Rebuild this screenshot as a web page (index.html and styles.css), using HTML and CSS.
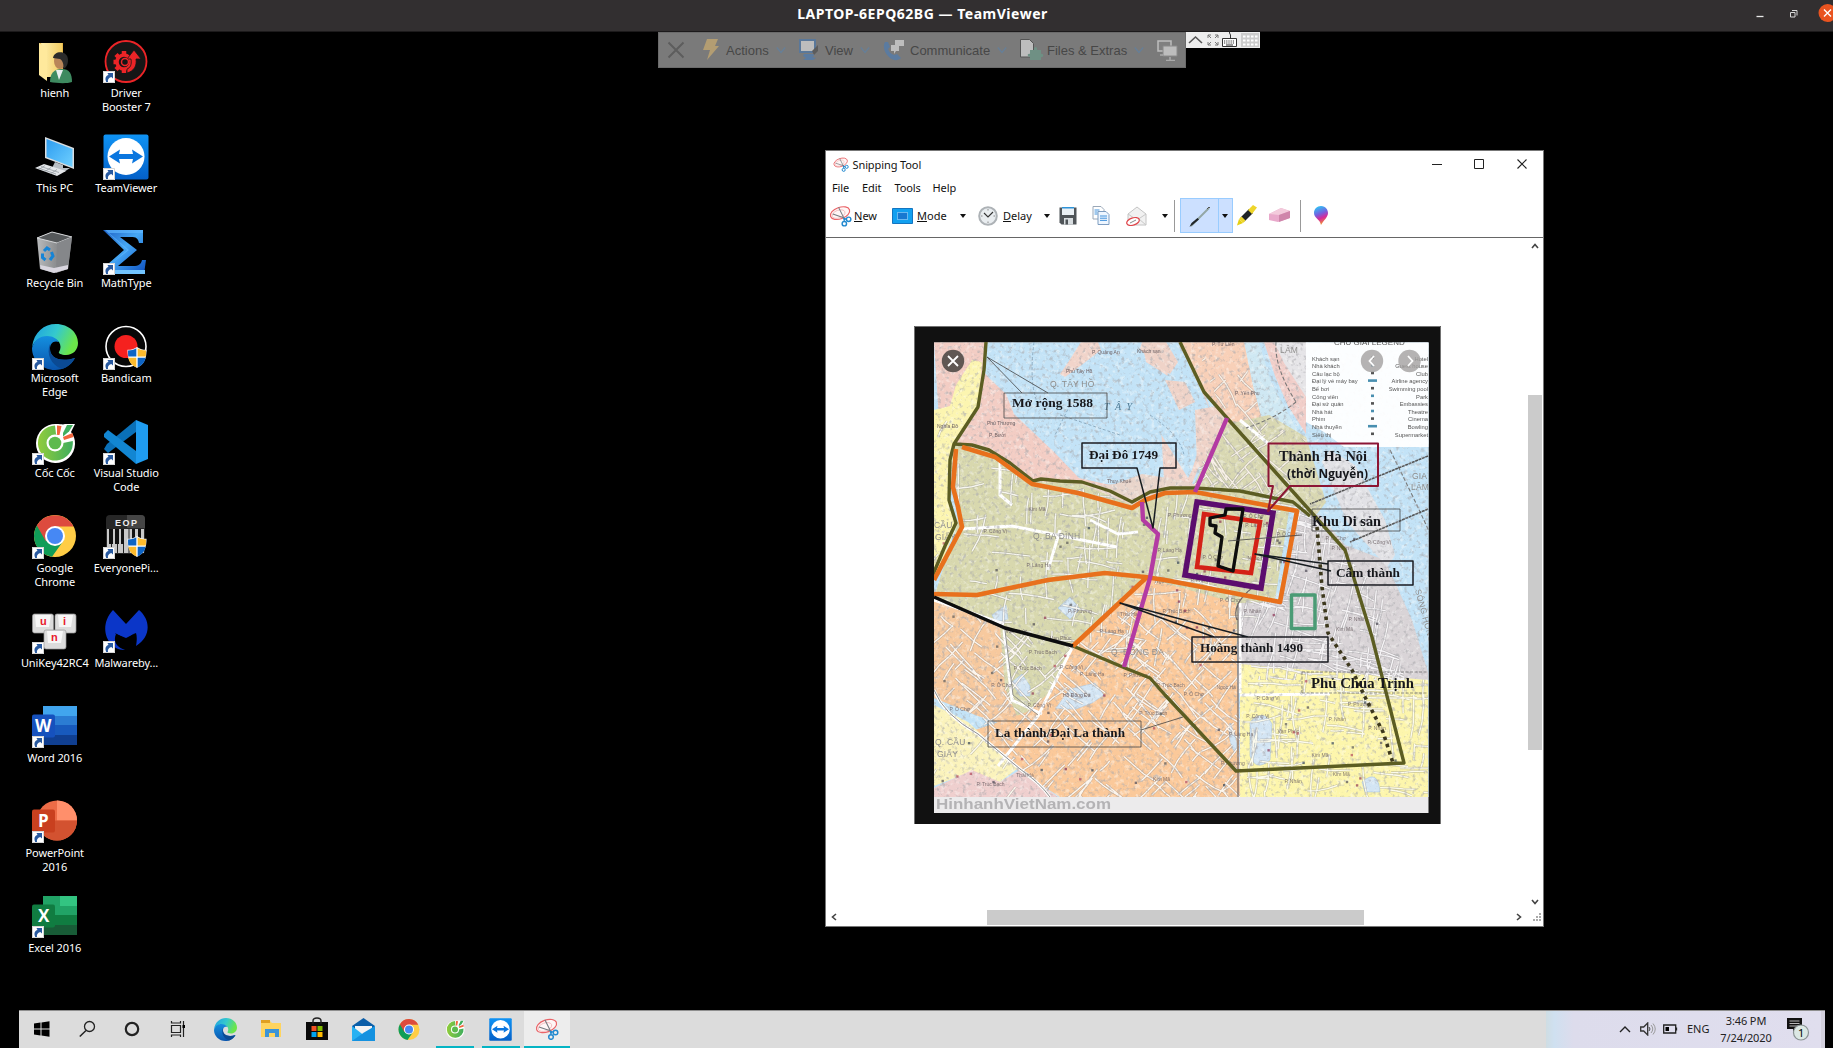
FILE: index.html
```html
<!DOCTYPE html>
<html lang="en">
<head>
<meta charset="utf-8">
<title>LAPTOP-6EPQ62BG — TeamViewer</title>
<link rel="stylesheet" href="styles.css">
</head>
<body>
<svg class="defs" width="0" height="0" aria-hidden="true">
<defs>
<linearGradient id="gEdge" x1="0" y1="0" x2="1" y2=".35"><stop offset="0" stop-color="#1b9de2"/><stop offset=".55" stop-color="#35c9cd"/><stop offset="1" stop-color="#6be64a"/></linearGradient>
<linearGradient id="gEdge2" x1="0" y1="0" x2="0" y2="1"><stop offset="0" stop-color="#148fdf"/><stop offset="1" stop-color="#0a55ad"/></linearGradient>
<linearGradient id="gTv" x1="0" y1="0" x2="0" y2="1"><stop offset="0" stop-color="#0f93f4"/><stop offset="1" stop-color="#0460c8"/></linearGradient>
<linearGradient id="gFold" x1="0" y1="0" x2="1" y2="0"><stop offset="0" stop-color="#fff0b0"/><stop offset="1" stop-color="#f3cd63"/></linearGradient>
<linearGradient id="gScreen" x1="0" y1="0" x2="1" y2="1"><stop offset="0" stop-color="#2d9cf0"/><stop offset="1" stop-color="#6fd0ff"/></linearGradient>
<linearGradient id="gSigma" x1="0" y1="0" x2="1" y2="1"><stop offset="0" stop-color="#1d5fc4"/><stop offset=".45" stop-color="#46a8f5"/><stop offset="1" stop-color="#0d4fc0"/></linearGradient>
<linearGradient id="gBin" x1="0" y1="0" x2="1" y2="0"><stop offset="0" stop-color="#b9bbbd"/><stop offset=".5" stop-color="#8f9193"/><stop offset="1" stop-color="#77797b"/></linearGradient>
<linearGradient id="gCoc" x1="0" y1="0" x2="1" y2="0"><stop offset="0" stop-color="#91cc3c"/><stop offset="1" stop-color="#3fae5d"/></linearGradient>
<linearGradient id="gBalloon" x1=".3" y1="0" x2=".6" y2="1"><stop offset="0" stop-color="#2cc6f5"/><stop offset=".4" stop-color="#7460e0"/><stop offset=".65" stop-color="#d62a9a"/><stop offset="1" stop-color="#f4a020"/></linearGradient>
<symbol id="edge" viewBox="0 0 46 46">
<path d="M0 23C2 8 12 0 24 0c13 0 22 9 22 19 0 7-5 12-12 12-5 0-8-2-7-3 2-3 2-7 0-10-3-3-7-5-12-5C9 13 3 16 0 23z" fill="url(#gEdge)"/>
<path d="M0 24C2 16 8 12 15 12c6 0 10 3 12 6-6-2-9 2-9 7 0 8 9 14 25 9-4 8-12 12-20 12C10 46 0 36 0 24z" fill="url(#gEdge2)"/>
<path d="M18 20c-4 10 1 21 12 25 6-2 10-6 13-11-16 5-25-1-25-9z" fill="#0b4a93"/>
</symbol>
<symbol id="chrome" viewBox="0 0 44 44">
<circle cx="22" cy="22" r="21" fill="#ffcd46"/>
<path d="M22 22 3.800 11.500A21 21 0 0 0 19 42.800L31 26z" fill="#109d58"/>
<path d="M3.800 11.500A21 21 0 0 1 40.500 12.500H22l-9 15z" fill="#dd4b3e"/>
<circle cx="22" cy="22" r="10" fill="#fff"/><circle cx="22" cy="22" r="8" fill="#4688f4"/>
</symbol>
<symbol id="coc" viewBox="0 0 46 46">
<path d="M24 5c5 0 7 1 9 0h10l-4 8c3 4 4 7 4 12a19.500 19.500 0 1 1-19-20z" fill="#fff"/>
<path d="M23 6.500A17.500 17.500 0 1 0 40.800 22L31 24 24 15z" fill="url(#gCoc)"/>
<path d="m31 14 4-8h6l-4 6.500-6 5z" fill="#3fae5d"/>
<path d="m25 6.500 4.500.5-2 9h-2.500zM31 18l9.500-4 1 4-9.500 3z" fill="#f2643c"/>
<circle cx="23" cy="24" r="8.500" fill="#fff"/><circle cx="23" cy="24" r="6.300" fill="#5dba4e"/>
</symbol>
<symbol id="tv" viewBox="0 0 46 46">
<rect x=".5" y=".5" width="45" height="45" rx="2" fill="url(#gTv)"/><circle cx="23" cy="22.500" r="18.500" fill="#fff"/>
<path d="m6 22.500 11-7-1 4.500h14l-1-4.500 11 7-11 7 1-4.500H16l1 4.500z" fill="#0a76df"/>
</symbol>
<symbol id="snip" viewBox="0 0 24 22">
<ellipse cx="11.500" cy="8" rx="10.500" ry="6" transform="rotate(-20 11.500 8)" fill="#fff6f6" stroke="#ea6468" stroke-width="1.200"/>
<ellipse cx="10" cy="9" rx="7" ry="4" transform="rotate(-20 10 9)" fill="none" stroke="#f0b6b8" stroke-width=".8"/>
<path d="m10 2 6 12M4 9l12 4" stroke="#777b80" stroke-width="1.100" fill="none"/>
<circle cx="20.500" cy="14.500" r="2.300" fill="none" stroke="#2389cf" stroke-width="1.500"/><circle cx="16" cy="19" r="2.300" fill="none" stroke="#2389cf" stroke-width="1.500"/><path d="m14.500 12.500 4 1-3 3.500z" fill="#2389cf"/>
</symbol>
<symbol id="link" viewBox="0 0 12 12"><path fill="#fff" d="M0 0h12v12H0z"/><path d="M.5.5h11v11H.5z" fill="none" stroke="#b9b9b9" stroke-width=".6"/><path d="M3.200 11C1.600 7 3 4.500 5.500 4L4.500 2H10v5.500L8.300 6C5.500 7 4.500 8.500 5 11z" fill="#28599f"/></symbol>
<symbol id="shield" viewBox="0 0 20 22"><path d="M10 0c3 2 6 3 10 3 0 9-2 15-10 19C2 18 0 12 0 3c4 0 7-1 10-3z" fill="#fff"/><path d="M9.300 1.300V10H.8C.6 8 .6 6 .6 3.600c3.500 0 6-.8 8.700-2.300zM10.700 11.200h8.300c-.8 4.500-3 7.500-8.300 10z" fill="#0e64c4"/><path d="M10.700 1.300c2.700 1.500 5.200 2.300 8.700 2.300 0 2.400 0 4.400-.2 6.400h-8.500zM1 11.200h8.300v10C4 18.700 1.800 15.700 1 11.200z" fill="#fdbb2d"/></symbol>
<symbol id="chev" viewBox="0 0 10 8"><path d="m.8 1.500 4.200 5 4.200-5" fill="none" stroke="#667f98" stroke-width="1.300"/></symbol>
</defs>
</svg>

<header class="titlebar">
  <span class="titlebar-text">LAPTOP-6EPQ62BG — TeamViewer</span>
  <svg class="titlebar-buttons" width="83" height="31" viewBox="1750 0 83 31"><path d="M1756.500 16.500h7" stroke="#e8e8e8" stroke-width="1.300"/><path d="M1790.500 12.500h4.500v4.500h-4.500zM1792 10.500h5v5" fill="none" stroke="#d8d8d8"/><circle cx="1827.500" cy="13" r="9" fill="#e95420"/><path d="m1824 9.500 7 7m0-7-7 7" stroke="#fff" stroke-width="1.400"/></svg>
</header>

<main class="desktop">
  <ul class="icons">
    <li><svg width="46" height="46" viewBox="1 0 46 46"><path d="M8 4h24v34H14z" fill="#e8b84a"/><path d="M10 4h21v34H16z" fill="url(#gFold)"/><path d="m8 4 8 5v33l-8-6z" fill="#ffe99c"/><path d="M19 43c0-9 4-13 12-13 7 0 10 4 10 13-6 2-16 1-22 0z" fill="#3e8a60"/><path d="m25 31 3 10 4-10z" fill="#e8eef0"/><ellipse cx="29" cy="22" rx="6" ry="8" fill="#b98659"/><path d="M22 19c1-8 15-8 15 2 0 5-2 8-5 9 1-4 0-8-3-10z" fill="#2b2b2b"/></svg><span>hienh</span></li>
    <li><svg width="46" height="46" viewBox="0 0 46 46"><path d="m13 3 29 11v21L13 24z" fill="#d9dde0"/><path d="m14.500 5 26 10v18l-26-10z" fill="url(#gScreen)"/><path d="m23 28 8 3v3h7l-6 4-12-4z" fill="#b8bec4"/><path d="m3 34 9-4 22 7-9 5z" fill="#e3e6e9"/><path d="m6 34 18 6M9 32.500l18 6M13 31.500l-6 4m12-2-6 4m12-2-6 4" stroke="#8d949b" stroke-width=".7"/></svg><span>This PC</span></li>
    <li><svg width="46" height="46" viewBox="0 0 46 46"><path d="m5 9 15-6 20 5-4 32-14 4-14-4z" fill="url(#gBin)"/><path d="m5 9 15-6 20 5-15 6z" fill="#55585a" stroke="#d5d7d9"/><path d="m25 14 15-6-4 32-12 4z" fill="#85878a"/><path d="m8 36 14 3 14-3v4l-14 4-13-4z" fill="#d9d6df"/><path d="m12 22 3-3 3 2M10.500 24.500v4l3 2.500m6-8 1.500 4-3 4" fill="none" stroke="#1684d6" stroke-width="3"/></svg><span>Recycle Bin</span></li>
    <li><svg width="46" height="46" viewBox="0 0 46 46"><use href="#edge"/><use href="#link" x="0" y="34" width="12" height="12"/></svg><span>Microsoft<br>Edge</span></li>
    <li><svg width="46" height="46" viewBox="0 0 46 46"><use href="#coc"/><use href="#link" x="0" y="34" width="12" height="12"/></svg><span>Cốc Cốc</span></li>
    <li><svg width="46" height="46" viewBox="0 0 46 46"><use href="#chrome" x="1" y="0" width="44" height="44"/><use href="#link" x="0" y="33" width="12" height="12"/></svg><span>Google<br>Chrome</span></li>
    <li><svg width="46" height="46" viewBox="0 0 46 46"><g fill="#dcdcdc" stroke="#9a9a9a" stroke-width=".7"><rect x=".5" y="5" width="21" height="19" rx="2"/><rect x="23" y="5" width="21" height="19" rx="2"/><rect x="12" y="21" width="22" height="19" rx="2"/></g><path d="M3 6h16l-2 12H4zM26 6h15l-2 12H27zM15 22h16l-2 12H16z" fill="#f6f6f6"/><g class="key"><text x="8" y="16">u</text><text x="31" y="16">i</text><text x="19" y="32">n</text></g><use href="#link" x="0" y="33" width="12" height="12"/></svg><span>UniKey42RC4</span></li>
    <li><svg width="46" height="46" viewBox="0 0 46 46"><path d="M11 2h34v10H11z" fill="#41a5ee"/><path d="M11 12h34v9H11z" fill="#2b7cd3"/><path d="M11 21h34v10H11z" fill="#185abd"/><path d="M11 31h34v10H11z" fill="#103f91"/><rect y="10.500" width="23" height="23" rx="2" fill="#1651bd"/><text class="office" x="3" y="27.500" textLength="17">W</text><use href="#link" x="0" y="32" width="12" height="12"/></svg><span>Word 2016</span></li>
    <li><svg width="46" height="46" viewBox="0 0 46 46"><circle cx="25" cy="21.500" r="20" fill="#ed6c47"/><path d="M25 1.500a20 20 0 0 1 20 20H25z" fill="#ff8f6b"/><path d="M5 21.500h40a20 20 0 0 1-40 0z" fill="#d35230"/><rect y="10.500" width="23" height="23" rx="2" fill="#c9401f"/><text class="office" x="6" y="27.500">P</text><use href="#link" x="0" y="32" width="12" height="12"/></svg><span>PowerPoint<br>2016</span></li>
    <li><svg width="46" height="46" viewBox="0 0 46 46"><path d="M11 2h17v10H11z" fill="#21a366"/><path d="M28 2h17v10H28z" fill="#33c481"/><path d="M11 12h34v9H11z" fill="#21a366"/><path d="M11 21h34v10H11z" fill="#107c41"/><path d="M11 31h34v10H11z" fill="#185c37"/><rect y="10.500" width="23" height="23" rx="2" fill="#107c41"/><text class="office" x="6" y="27.500">X</text><use href="#link" x="0" y="32" width="12" height="12"/></svg><span>Excel 2016</span></li>

    <li><svg width="46" height="46" viewBox="0 0 46 46"><circle cx="23" cy="22.500" r="20.500" fill="#161616" stroke="#ec2427" stroke-width="1.800"/><circle cx="21" cy="23" r="7" fill="none" stroke="#ec2427" stroke-width="3.500"/><g stroke="#ec2427" stroke-width="4.500"><path d="M21 12v4M21 30v4M10.500 23h4M13 15.500l3 3M13 30.500l3-3"/></g><path d="M24 34c7-2 10-7 9-14h5l-7-9-7 9h4c1 6-1 9-4 10z" fill="#ec2427" stroke="#161616" stroke-width=".8"/><circle cx="22" cy="23" r="3.500" fill="#161616" stroke="#ec2427" stroke-width="1.500"/><use href="#link" x="0" y="32" width="12" height="12"/></svg><span>Driver<br>Booster 7</span></li>
    <li><svg width="46" height="46" viewBox="0 0 46 46"><use href="#tv"/><use href="#link" x="0" y="34" width="12" height="12"/></svg><span>TeamViewer</span></li>
    <li><svg width="46" height="46" viewBox="0 0 46 46"><path d="M0 1h40v13h-4c-1-5-3-6-8-6H17l17 13-19 16h15c6 0 8-2 9-6h4l-2 14H5V35l16-14z" fill="url(#gSigma)"/><path d="M2 1h38v3H6l20 17L8 35l16-14z" fill="#5eb7ff" opacity=".7"/><path d="M12 41h30v4H12z" fill="#72c4ff"/><use href="#link" x="0" y="34" width="12" height="12"/></svg><span>MathType</span></li>
    <li><svg width="46" height="46" viewBox="0 0 46 46"><circle cx="23" cy="22.500" r="20" fill="#070707" stroke="#fff" stroke-width="1.600"/><circle cx="23" cy="22.500" r="11.500" fill="#f5211f"/><use href="#shield" x="24" y="23" width="20" height="21"/><use href="#link" x="0" y="34" width="12" height="12"/></svg><span>Bandicam</span></li>
    <li><svg width="46" height="46" viewBox="0 0 46 46"><path d="M33 1 45 6v34l-12 5z" fill="#1f9cf0"/><path d="M33 1v12L5 34l-4-4 3-5z" fill="#0a70b8"/><path d="m1 15 4-4 28 21v13L1 18z" fill="#1286d2"/><use href="#link" x="0" y="34" width="12" height="12"/></svg><span>Visual Studio<br>Code</span></li>
    <li><svg width="46" height="46" viewBox="0 0 46 46"><rect x="3" y="1" width="39" height="39" rx="4" fill="#272727"/><path d="M24 1h14q4 0 4 4v9H24z" fill="#454545"/><path d="M4 15h37v24H4z" fill="#c9c9c9"/><path d="M8.500 15v24M14.500 15v24M20.500 15v24M26 15v24M31 15v24" stroke="#222"/><path d="M6 15h4v15H6zM12 15h4v15h-4zM18 15h3v15h-3zM29 15h3v15h-3zM35 15h3v15h-3z" fill="#111"/><text class="eop" x="12" y="12" textLength="22">EOP</text><use href="#shield" x="24" y="22" width="20" height="21"/><use href="#link" x="0" y="33" width="12" height="12"/></svg><span>EveryonePi...</span></li>
    <li><svg width="46" height="46" viewBox="0 0 46 46"><path d="M10 1 23 15 36 1c12 10 12 27-3 36 1-6 1-10 0-13L23 29l-10-4c-3 7 0 13 9 16C5 42-6 18 10 1z" fill="#0b36c8"/><path d="m12 24 11 6 9-6c-4 4-6 7-9 7s-8-3-11-7z" fill="#000"/><use href="#link" x="0" y="32" width="12" height="12"/></svg><span>Malwareby...</span></li>
  </ul>

  <nav class="tvbar">
    <div class="tvbar-close"><svg width="18" height="18"><path d="m1.500 1.500 15 15m0-15-15 15" stroke="#5d5d5d" stroke-width="2"/></svg></div>
    <div class="tvitem"><svg width="23" height="22"><path d="M4 0h11l-3 7h4L4 21l3-10H0z" fill="#b39d72"/></svg><span>Actions</span><svg class="chev" width="10" height="8"><use href="#chev"/></svg></div>
    <div class="tvitem"><svg width="26" height="22"><path d="M1 1h15v12H1z" fill="#bdbdbd" stroke="#5a789a" stroke-width="2"/><path d="m13 12 6-6v6l-4 4z" fill="#5c5c5c"/><path d="M5 15h7c4 0 4 2 1 3l4 1-3 2H4l3-2-3-2z" fill="#5b7ba0"/></svg><span>View</span><svg class="chev" width="10" height="8"><use href="#chev"/></svg></div>
    <div class="tvitem"><svg width="27" height="22"><path d="M2 3h3l2 5-2 2c1 3 3 5 6 6l3-1 4 4c-3 3-8 3-12-1C2 14-1 8 2 3z" fill="#5b7ba0"/><path d="M12 1h9v6h-9zM8 6h8v6h-3l-2 3v-3H8z" fill="#bdbdbd"/></svg><span>Communicate</span><svg class="chev" width="10" height="8"><use href="#chev"/></svg></div>
    <div class="tvitem"><svg width="27" height="22"><path d="M.5.5h9l4 4V18H.5z" fill="#bdbdbd" stroke="#555"/><path d="M10 11h4c-1-4 4-4 3 0h4v4c3-1 3 4 0 3v3H10v-3c-3 0-3-4 0-3z" fill="#6f9084"/></svg><span>Files &amp; Extras</span><svg class="chev" width="10" height="8"><use href="#chev"/></svg></div>
    <svg width="22" height="21"><path d="M1 1h13v10H1z" fill="#808080" stroke="#bdbdbd" stroke-width="1.500"/><path d="M6 6h14v10H6z" fill="#bdbdbd" stroke="#8a8a8a"/><path d="M13 17v3m-4 .500h9M3 15h3" stroke="#aaa" stroke-width="1.500"/></svg>
  </nav>
  <svg class="minibar" width="74" height="16" viewBox="0 0 74 16"><path d="M0 0h74v16H0z" fill="#ededed"/><path d="m3 11 6.500-6L16 11" fill="none" stroke="#555" stroke-width="1.600"/><path d="M22 6V3h3m-3 0 3 3m4-3h3v3m0-3-3 3m-7 4v3h3m-3 0 3-3m4 3h3v-3m0 3-3-3" stroke="#777" fill="none"/><path d="M36.500 6.500h14v8h-14z" fill="#fff" stroke="#333"/><path d="M38 9h11m-11 2h11" stroke="#333" stroke-width="1.200" stroke-dasharray="1.200 1"/><path d="M40 13h7M44.500 6V3l-1-2V0" stroke="#333" fill="none"/><path d="M55 1h18v14H55z" fill="#ccc"/><path d="M57 4.500h15m-15 4h15m-15 4h15" stroke="#fff" stroke-width="2" stroke-dasharray="2.500 1.500"/></svg>

  <section class="window">
    <div class="win-title"><svg width="16" height="15"><use href="#snip"/></svg><span>Snipping Tool</span>
      <svg class="win-controls" width="97" height="12"><path d="M0 6.500h10" stroke="#222"/><path d="M42.500 1.500h9v9h-9z" fill="none" stroke="#222"/><path d="m85.500 1.500 9 9m0-9-9 9" stroke="#222" stroke-width="1.100"/></svg></div>
    <div class="win-menu"><span>File</span><span>Edit</span><span>Tools</span><span>Help</span></div>
    <div class="win-tools">
      <div class="tool"><svg width="23" height="22"><use href="#snip"/></svg><span class="t-new"><u>N</u>ew</span></div>
      <div class="tool"><svg width="21" height="16"><path d="M.5.5h20v15H.5z" fill="#12a0f0" stroke="#1475c0"/><path d="M5.500 4.500h10v7h-10z" fill="#1878d0" stroke="#bfe5ff" stroke-dasharray="1 1"/></svg><span class="t-mode"><u>M</u>ode</span><i class="drop"></i></div>
      <div class="tool"><svg width="20" height="20"><circle cx="10" cy="10" r="8.800" fill="#e9edf0" stroke="#adb2b6" stroke-width="2"/><path d="m6 7 4 4 5-5" fill="none" stroke="#333" stroke-width="1.100"/><path d="M10 3v1.500M10 15.500V17M3 10h1.500M15.500 10H17" stroke="#888"/></svg><span class="t-delay"><u>D</u>elay</span><i class="drop"></i></div>
      <div class="tool"><svg width="18" height="18"><path d="M.5.5h17v17h-15l-2-2z" fill="#4f5458"/><path d="M3 1h12v7H3z" fill="#eaf0f4"/><path d="M3 0h12v1.500H3z" fill="#2e93d8"/><path d="M5 11h9v6.500H5z" fill="#d8dde0"/><path d="M6.500 12.500H9v5H6.500z" fill="#4f5458"/></svg></div>
      <div class="tool"><svg width="18" height="19"><path d="M1 .5h8l3 3V13H1z" fill="#fff" stroke="#9aa8b8"/><path d="M6 5.500h8l3 3v10H6z" fill="#eef6ff" stroke="#7d9cc0"/><path d="M8 10h7m-7 2.200h7m-7 2.200h7M2.500 4h5m-5 2h3m-3 2h3" stroke="#2b86d8" stroke-width=".9"/></svg></div>
      <div class="tool"><svg width="21" height="20"><path d="m2 8 9-7 9 7v11H2z" fill="#f1f1f1" stroke="#c4c4c4"/><path d="m2 8 9 6 9-6M2 19l7-6m11 6-7-6" fill="none" stroke="#c8c8c8"/><ellipse cx="7" cy="15.500" rx="6.500" ry="3.600" transform="rotate(-18 7 15.500)" fill="#fff" stroke="#e0454a" stroke-width="1.200"/><path d="m4 17 6-3" stroke="#888"/></svg><i class="drop"></i></div>
      <i class="sep"></i>
      <div class="tool selected"><svg width="38" height="33"><path d="m10 27 18-18" stroke="#93a7a5" stroke-width="2"/><path d="m8.500 28 2-4 6-5 1.500 1.500-6 5z" fill="#20262a"/><path d="m26 10 2-2 1 1" stroke="#555" fill="none"/></svg><i class="drop"></i></div>
      <div class="tool hl"><svg width="20" height="21"><path d="m0 20.500 2-6.500 4 4z" fill="#e5cf12"/><path d="M3.500 12.500 12 4l4 4-8.500 8.500z" fill="#1f2326"/><path d="m2 14 2.500-2.500 4 4L6 18zM11 5l5-5 4 2.500-5 6.500z" fill="#eed52b"/></svg></div>
      <div class="tool"><svg width="21" height="15"><path d="M0 6 12 0l9 3v7L9 14l-9-2z" fill="#e9a9cb"/><path d="M0 6 12 0l9 3L10 7z" fill="#f3cbdc"/><path d="m10 7 11-4v7L10 14z" fill="#cf86ab"/></svg></div>
      <i class="sep"></i>
      <div class="tool"><svg width="14" height="19"><path d="M7 0c5 0 7 4 7 7 0 4-4 7-7 12C6 13 0 12 0 7c0-4 3-7 7-7z" fill="url(#gBalloon)"/></svg></div>
    </div>
    <div class="canvas">
      <svg class="map" width="527" height="498" viewBox="914 326 527 498">
        <defs>
          <clipPath id="mapClip"><path d="M934 342.500h494.500V797H934z"/></clipPath>
          <clipPath id="cOld"><path id="pOld" d="M954 445 989 450 1033 481 1082 484 1132 505 1170 490 1240 491 1290 505 1275 600 1240 640 1150 690 1073 646 1005 628 934 597 958 523z"/></clipPath>
          <clipPath id="cSouth"><path d="M934 597 1005 628 1073 646 1180 575 1240 610V797H1055L1010 765 975 730 934 690z"/></clipPath>
          <clipPath id="cEast"><path d="M1240 500 1310 505 1350 560 1380 590 1405 680H1240L1236 600 1280 602 1297 511z"/></clipPath>
          <clipPath id="cYellow"><path d="M1240 668 1428 680V797H1240z"/></clipPath>
          <clipPath id="cWest"><path d="M934 400 975 380 950 444 949 500 958 523 934 575zM934 690 975 730 1020 768 1055 797H934z"/></clipPath>
          <clipPath id="cNorth"><path d="M1195 342H1240L1262 420 1306 440 1290 500 1190 485 1225 420z"/></clipPath>
          <filter id="grain" x="0" y="0" width="100%" height="100%"><feTurbulence type="fractalNoise" baseFrequency=".24" numOctaves="3" seed="8"/><feColorMatrix values="0 0 0 0 .4  0 0 0 0 .4  0 0 0 0 .42  0 3.800 0 0 -2.050"/></filter>
          <filter id="flecks" x="0" y="0" width="100%" height="100%"><feTurbulence type="fractalNoise" baseFrequency=".2" numOctaves="3" seed="23"/><feColorMatrix values="0 0 0 0 1  0 0 0 0 1  0 0 0 0 .98  0 0 4 0 -2.100"/></filter>
          <filter id="soft"><feGaussianBlur stdDeviation=".5"/></filter>
          <filter id="softText"><feGaussianBlur stdDeviation=".35"/></filter>
        </defs>
        <path d="M914 326h527v498H914z" fill="#111"/><path d="M914.500 824V326.500H1440.500V824" fill="none" stroke="#8a8a8a" stroke-width=".8"/>
        <path d="M934 342.500h494.500V813H934z" fill="#ecebec"/>
        <g clip-path="url(#mapClip)">
          <g filter="url(#soft)">
          <path d="M934 342h495v456H934z" fill="#c3e3f7"/>
          <path d="M934 342h52l-2 30 6 7 16 15 8 20 40 38 25 26 49 11-8 36-180-90z" fill="#f3cdc4"/>
          <path d="M934 410 950 406 956 385 972 360 982 362 978 407 954 444 949 500 958 523 934 580z" fill="#fcf5b0"/>
          <path d="m1098 342 3 8-26 20-10 7-5-3 7-10 14-22zM1142 342h38l24 50 12 34-25 60-12 0-15-5-3-55 12-28-5-22-22-14z" fill="#f1d4ca"/>
          <path d="M1178 342 1202 392 1212 414 1200 445 1192 470 1188 478 1140 400 1150 390 1168 375 1160 342z" fill="#c3e3f7"/>
          <path d="M1142 342h24l12 20-8 12-12-5-18-20zM1165 380l20 2 10 20-16 8zM1195 410l22-4 8 14-20 50-8-4z" fill="#efd3c8"/>
          <path d="M1050 490 1115 484 1142 474 1180 480 1200 486 1180 500 1132 508z" fill="#e9d5cb"/>
          <path d="m1180 342 66 0 24 60-6 22-34 16-4-22-22-26z" fill="#f8d0b8"/>
          <path d="m1244 342 15 0 12 40 30 55-12 18-28-39-8-30z" fill="#cfe8f3"/>
          <path d="m1264 342h42v92l-18-28-13-30z" fill="#f1cec9"/>
          <path d="M1274 342h32v55l-22-34z" fill="#e6e5e8"/>
          <path d="m1222 425 47-10 37 22 20 65-15 20-40-25-78-10z" fill="#d9d8b2"/>
          <use href="#pOld" fill="#d8d8ae"/>
          <path d="m934 597 71 31 68 18-25 60-10 30-60-20-44-18z" fill="#f7c99e"/>
          <path d="m1000 627 73 19-18 42-28 24-10 4-12-28z" fill="#d8d8ae"/>
          <path d="m1073 646 73-68 90 25 4 194H1060L1010 765 975 730 1040 708z" fill="#fbc99a"/>
          <path d="M934 705 968 722 1018 768 1000 782 970 772 934 786z" fill="#fbf3bc"/>
          <path d="m934 788 38-18 28 12 20-12 38 27H934z" fill="#efcfce"/>
          <path d="M1238 603 1280 602 1297 511 1320 515 1345 545 1385 560 1412 620 1428 672V680L1240 670z" fill="#d9d4d7"/>
          <path d="M1240 664 1428 680V797H1240z" fill="#fdf6ac"/>
          <path d="m1330 450 25 15 30 55 10 35-8 12-40-45-25-60z" fill="#e2e2e6"/>
          <path d="M1250 722q14-14 22 2l-2 36q-14 12-20-4zM1230 723q10 20 5 30-8-12-5-30zM1362 782q16-14 18 10h-15zM1056 708l14-19 25-6 9 12-12 8-16 6-12 0zM992 615l14-10 2 14-12 4zM1058 608l12-11 10 12-10 10zM1012 682l10-8 8 12v10l-10 0z" fill="#d3e5f4" stroke="#a9c4df" stroke-width=".6"/>
          </g>
          <rect x="934" y="342" width="495" height="456" filter="url(#flecks)" opacity=".4"/>
          <g filter="url(#softText)">
          <g id="streets"></g>
          <g fill="none" stroke="#fff" stroke-width="3"><path d="M934 690q10 25 44 44l42 35q20 14 30 28M934 600l70 24M1073 646l-35 70-40 50M1004 630l8 70 30 14M962 529l50-3 45 9 60 12M1240 420l30 25M1000 455v40l12 10M1090 520l28 14 20-2M1060 530l-12 40M1240 603v90M1240 695l90-1"/></g>
          <path d="M934 690q10 25 44 44l42 35q20 14 30 28M1005 630l8 65 25 20" fill="none" stroke="#90908c" stroke-width="1"/>
          <path d="M1238 603v195M1237 620q-6-15 15-32" fill="none" stroke="#6e6565" stroke-width="1.200"/>
          <path d="M1276 342q-2 25 20 60M1390 450q40 80 60 130M1296 402q-20 16-50 26" fill="none" stroke="#777" stroke-width="1.100" stroke-dasharray="4 2"/>
          <path d="M1428 456 1310 504M1428 509 1350 542" stroke="#555" stroke-width="1.600" stroke-dasharray="3 .6"/>
          <path d="M1034 342q-5 40 3 60M1060 415l60 20M1070 405l-15 30M1150 415q30 20 34 40" fill="none" stroke="#7f9eb5" stroke-dasharray="3 2" stroke-width=".8"/>
          </g>
          <rect x="934" y="342" width="495" height="456" filter="url(#grain)" opacity=".6"/>
          <path d="M1306 342h123v105h-85l-20-15-18-10z" fill="#fff" opacity=".95"/>
          <g class="place" id="places" filter="url(#softText)"></g>
          <g class="district"><text x="1050" y="387">Q. TÂY HỒ</text><text x="1280" y="353">LÂM</text><text x="1412" y="479">GIA</text><text x="1411" y="490">LÂM</text><text x="935" y="745">Q. CẦU</text><text x="937" y="757">GIẤY</text><text x="1111" y="655">Q. ĐỐNG ĐA</text><text x="934" y="528">CẦU</text><text x="935" y="540">GIẤY</text><text x="1033" y="539">Q. BA ĐÌNH</text><text x="1415" y="590" transform="rotate(75 1415 590)">SÔNG HỒNG</text></g>
          <text class="lake" x="1104" y="410">T Â Y</text>
          <g class="legend" id="legend" filter="url(#softText)"></g>
          <g fill="none" stroke-linejoin="round" filter="url(#softText)">
            <g stroke="#5b5d22" stroke-width="3.400"><path d="M986 342 984 370 978 407 954 444 950 460 949 500 956 523 945 546 932 577"/><path d="M954 444 972 445 989 450 1010 463 1033 481 1041 479 1060 481 1082 482 1110 491 1132 502 1150 492 1170 488 1195 488 1240 491 1293 502 1310 516"/><path d="M1180 342 1204 392 1227 418 1312 513 1345 550 1352 572 1372 637 1404 763 1236 771 1165 695 1150 678 1125 668 1073 646"/></g>
            <g stroke="#e8701c" stroke-width="4.600"><path d="M962 447 995 457 1032 484 1078 493 1132 508 1145 500 1165 493 1195 492 1297 511 1280 602 1165 580 1145 577 1105 573 1048 580 977 595 934 594"/><path d="M956 449 953 487 958 507 962 527 934 580M1147 577 1073 646"/></g>
            <path d="M934 597 1005 628 1073 646" stroke="#080808" stroke-width="3.400"/>
            <path d="M1142 502 1143 520 1158 534 1150 578 1124 667M1227 418 1195 492" stroke="#b33aa3" stroke-width="4.400"/>
            <path d="M1197 502 1273 513 1261 588 1185 575z" stroke="#5b116e" stroke-width="5.500" stroke-linejoin="miter"/>
            <path d="M1204 514 1260 522 1251 573 1197 567z" stroke="#d42318" stroke-width="4.500" stroke-linejoin="miter"/>
            <path d="M1210 518 1225 515 1226 509 1243 509 1233 571 1218 566 1222 537 1215 533 1216 526 1210 525z" stroke="#080808" stroke-width="3.300"/>
            <path d="M1291.500 595H1315V628.500H1291.500z" stroke="#4b9b74" stroke-width="3.500"/>
            <path d="M1317 527 1320 563 1322 587 1328 633 1352 670 1365 697 1383 732 1393 763" stroke="#3c371d" stroke-width="3.600" stroke-dasharray="3.500 4"/>
            <g stroke="#444" stroke-width=".8"><path d="M1022 393 987 357 1048 393M1004 393H1107V418H1004zM1312 509H1400V531H1312zM988 721H1141V747H988zM1141 730 1183 717M1302 535 1228 541"/><path d="M1302 672H1428M1302 693H1428M1302 672V693" stroke-dasharray="3 1.500" opacity=".7"/></g>
            <path d="M1082 443H1176V468H1160L1153 528 1137 468H1082zM1328 561H1413V585H1328zM1328 564 1255 554 1331 571M1192 637H1328V662H1192zM1214 637 1120 603 1248 637" stroke="#181c20" stroke-width="1.500"/>
            <path d="M1268.500 443.500H1378V486H1290L1268 511 1273 486H1268.500z" stroke="#8c1736" stroke-width="2"/>
          </g>
          <g class="callout" filter="url(#softText)"><text x="1012" y="407" textLength="81" lengthAdjust="spacingAndGlyphs">Mở rộng 1588</text><text x="1089" y="458.500" textLength="69" lengthAdjust="spacingAndGlyphs">Đại Đô 1749</text><text class="wide" x="1279" y="461" textLength="88" lengthAdjust="spacingAndGlyphs">Thành Hà Nội</text><text class="sans" x="1287" y="477.500" textLength="81" lengthAdjust="spacingAndGlyphs">(thời Nguyễn)</text><text class="wide" x="1312" y="526" textLength="69" lengthAdjust="spacingAndGlyphs">Khu Di sản</text><text x="1336" y="577" textLength="64" lengthAdjust="spacingAndGlyphs">Cấm thành</text><text x="1200" y="652" textLength="103" lengthAdjust="spacingAndGlyphs">Hoàng thành 1490</text><text class="wide" x="1311" y="688" textLength="103" lengthAdjust="spacingAndGlyphs">Phủ Chúa Trịnh</text><text x="995" y="736.500" textLength="130" lengthAdjust="spacingAndGlyphs">La thành/Đại La thành</text></g>
          <circle cx="953" cy="361" r="11.200" fill="#605753"/><path d="m948 356 10 10m0-10-10 10" stroke="#fff" stroke-width="1.800"/>
          <g fill="#a3a1a0" opacity=".8"><circle cx="1372" cy="361" r="11.200"/><circle cx="1409.500" cy="361" r="11.200"/></g><path d="m1374 356-4.500 5 4.500 5M1408 356l4.500 5-4.500 5" fill="none" stroke="#fff" stroke-width="1.800"/>
        </g>
        <text class="watermark" x="936" y="809" textLength="175" lengthAdjust="spacingAndGlyphs">HinhanhVietNam.com</text>
      </svg>
      <div class="vscroll"><svg width="8" height="6"><path d="m1 5 3-3.500L7 5" fill="none" stroke="#444" stroke-width="1.600"/></svg><i></i><svg width="8" height="6"><path d="m1 1 3 3.500L7 1" fill="none" stroke="#444" stroke-width="1.600"/></svg></div>
    </div>
    <div class="hscroll"><svg width="6" height="8"><path d="M5 1 1.500 4 5 7" fill="none" stroke="#444" stroke-width="1.600"/></svg><i></i><svg width="6" height="8"><path d="m1 1 3.500 3L1 7" fill="none" stroke="#444" stroke-width="1.600"/></svg><svg class="grip" width="9" height="9"><path d="M6 0h2v2H6zM3 3h2v2H3zM6 3h2v2H6zM0 6h2v2H0zM3 6h2v2H3zM6 6h2v2H6z" fill="#aaa"/></svg></div>
  </section>
</main>

<footer class="taskbar">
  <div class="cell"><svg width="16" height="16"><path d="m0 2.500 6.500-1v6H0zM7.500 1.400 15.500.3v7.200h-8zM0 8.500h6.500v6L0 13.500zM7.500 8.500h8v7.200l-8-1.100z"/></svg></div>
  <div class="cell"><svg width="18" height="18"><circle cx="10.500" cy="6.500" r="5" fill="none" stroke="#222" stroke-width="1.300"/><path d="M7 10.500 .800 16.500" stroke="#222" stroke-width="1.500"/></svg></div>
  <div class="cell"><svg width="20" height="16"><circle cx="8" cy="8" r="6.200" fill="none" stroke="#222" stroke-width="2.200"/></svg></div>
  <div class="cell"><svg width="20" height="16"><path d="M1.500 4.500h9v7h-9zM1.500 0v2h9V0M1.500 16v-2h9v2M13.500 0v16" fill="none" stroke="#222" stroke-width="1.200"/><path d="M12.500 4h2.500v3h-2.500z"/></svg></div>
  <div class="cell"><svg width="23" height="23"><use href="#edge"/></svg></div>
  <div class="cell"><svg width="21" height="18"><path d="M0 1h9l2 2h9v14H0z" fill="#ffd45e"/><path d="M0 0h9v3H0z" fill="#e0a021"/><path d="M4 17V9h14v8h-4v-4H8v4z" fill="#3d94d6"/></svg></div>
  <div class="cell"><svg width="22" height="24"><path d="M0 5h22v18H0z" fill="#090909"/><path d="M7 7V4c0-4 8-4 8 0v3" fill="none" stroke="#222" stroke-width="1.400"/><path d="M5.500 9h5v5h-5z" fill="#f25022"/><path d="M11.500 9h5v5h-5z" fill="#7fba00"/><path d="M5.500 15h5v5h-5z" fill="#00a4ef"/><path d="M11.500 15h5v5h-5z" fill="#ffb900"/></svg></div>
  <div class="cell"><svg width="23" height="23"><path d="M0 8 11.500 0 23 8v6H0z" fill="#0b5ea8"/><path d="M3 8h17v9H3z" fill="#f3f3f3"/><path d="m0 8 11.500 9L23 8v15H0z" fill="#27b1f2"/><path d="m0 23 12-8.500L23 8v15z" fill="#1592e0"/></svg></div>
  <div class="cell"><svg width="22" height="23"><use href="#chrome"/></svg></div>
  <div class="cell open"><svg width="22" height="22"><use href="#coc"/></svg></div>
  <div class="cell open"><svg width="23" height="23"><use href="#tv"/></svg></div>
  <div class="cell open active"><svg width="24" height="22"><use href="#snip"/></svg></div>
  <div class="tray">
    <svg width="12" height="8"><path d="m1 7 5-5 5 5" fill="none" stroke="#222" stroke-width="1.400"/></svg>
    <svg class="spk" width="16" height="14"><path d="M.7 5h3l4-4v12l-4-4h-3z" fill="none" stroke="#333" stroke-width="1.300"/><path d="M9 5q2 2 0 4" fill="none" stroke="#444"/><path d="M11 3q3.500 4 0 8M13 1.500q4.500 5.500 0 11" fill="none" stroke="#999"/></svg>
    <svg class="bat" width="15" height="10"><path d="M.7 1h12v8H.7zM13.500 3.500v3" fill="none" stroke="#222" stroke-width="1.300"/><path d="M2.500 3H6v4H2.500z"/></svg>
    <span class="lang">ENG</span>
    <span class="clock">3:46 PM<br>7/24/2020</span>
    <svg class="note" width="24" height="24"><path d="M0 1h15v11H9l-3 3v-3H0z" fill="#111"/><path d="M2.500 4h10m-10 2.500h10m-10 2.500h10" stroke="#ccc" stroke-width=".9"/><circle cx="14" cy="15.500" r="7.500" fill="#dce8e4" stroke="#8b9495" stroke-width="1.200"/><text x="11" y="19.500">1</text></svg>
  </div>
</footer>
<script src="map.js"></script>
</body>
</html>
```
FILE: styles.css
```css
* { box-sizing: border-box; }
body { margin: 0; width: 1833px; height: 1048px; overflow: hidden; background: #000; font-family: "Noto Sans", "Open Sans", sans-serif; display: flex; flex-direction: column; }
svg { display: block; flex: none; }
.defs { position: absolute; }

.titlebar { height: 32px; flex: none; background: #322f30; border-bottom: 1px solid #1c1a1b; display: flex; justify-content: flex-end; position: relative; }
.titlebar-text { position: absolute; left: 0; width: 1845px; text-align: center; line-height: 27px; color: #fff; font-weight: 700; font-size: 14px; letter-spacing: .520px; }

.desktop { flex: 1; position: relative; }
.icons { list-style: none; margin: 0; padding: 7px 0 0 19px; display: grid; grid-template: repeat(10, 95px) / 71.500px 71.500px; grid-auto-flow: column; width: max-content; }
.icons li { display: flex; flex-direction: column; align-items: center; gap: 1px; color: #fff; font-size: 11px; letter-spacing: -.1px; line-height: 14px; text-align: center; white-space: nowrap; }
.key { font: 700 11px "Liberation Sans", sans-serif; fill: #e8192c; }
.office { font: 700 17px "Open Sans", sans-serif; fill: #fff; }
.eop { font: 700 9px "Liberation Sans", sans-serif; fill: #eee; }

.tvbar { position: absolute; left: 658px; top: 0; width: 528px; height: 36px; background: #7a7a7a; border: 1px solid #6b6b6b; display: grid; grid-template-columns: 44px 96px 84px 137px 137px 28px; align-items: center; font: 13px "Liberation Sans", sans-serif; color: #474747; }
.tvbar-close { padding-left: 8px; }
.tvitem { display: flex; align-items: center; padding-right: 13px; }
.tvitem .chev { margin-left: auto; }
.minibar { position: absolute; left: 1186px; top: 0; }

.window { position: absolute; left: 825px; top: 118px; width: 719px; height: 777px; background: #fff; border: 1px solid #777; display: flex; flex-direction: column; font-size: 11px; color: #111; }
.win-title { height: 26px; display: flex; align-items: center; padding: 0 14px 0 7px; gap: 3.500px; letter-spacing: -.1px; }
.win-controls { margin-left: auto; }
.win-menu { height: 21px; display: grid; grid-template-columns: 30px 32.500px 38px 40px; padding-left: 6px; align-items: center; letter-spacing: -.1px; }
.win-tools { height: 40px; display: grid; grid-template-columns: 63px 86px 81px 33px 34px 48px 6px 53px 36px 31px 14px 20px; padding: 0 0 5px 3px; align-items: center; border-bottom: 1px solid #666; }
.tool { display: flex; align-items: center; }
.t-new { margin-left: 2px; }
.t-mode { margin-left: 4px; width: 43px; }
.t-delay { margin-left: 5px; width: 41px; }
.drop { width: 0; height: 0; border: 3.500px solid transparent; border-top: 4px solid #111; border-bottom: 0; }
.tool > svg + .drop { margin-left: 15px; }
.sep { width: 1px; height: 32px; background: #999; }
.selected { background: #cce0ff; border: 1px solid #99ccff; height: 35px; }
.selected > svg { border-right: 1px solid #99ccff; }
.tool.selected > svg + .drop { margin-left: 3px; }
.hl { padding-left: 4px; }
.canvas { flex: 1; display: flex; justify-content: space-between; padding-left: 88px; }
.map { margin-top: 88px; }
.vscroll { width: 16px; display: flex; flex-direction: column; align-items: center; padding: 5px 1px 4px 0; }
.vscroll i { width: 14px; height: 355px; background: #cbcbcb; margin: 146px 0 auto; }
.hscroll { height: 17px; display: flex; align-items: center; padding: 0 1px 1px 5px; }
.hscroll i { width: 377px; height: 15px; background: #cbcbcb; margin: 0 auto 0 150px; }
.grip { margin-left: 11px; }

.place { font: 5px "Liberation Sans", sans-serif; fill: #6b5f62; }
.district { font: 8.500px "Liberation Sans", sans-serif; fill: #8e8d8c; letter-spacing: .2px; }
.lake { font: italic 10px "Liberation Serif", serif; fill: #527d97; letter-spacing: 1.500px; }
.legend { font: 5.800px "Liberation Sans", sans-serif; fill: #555; }
.legend .en { text-anchor: end; }
.callout { font: 700 13px "Liberation Serif", serif; fill: #16181c; }
.callout .wide { font-size: 14px; }
.callout .sans { font: 700 12px "Open Sans", "Liberation Sans", sans-serif; }
.watermark { font: 700 15.500px "Liberation Sans", sans-serif; fill: #b4b3b5; }

.taskbar { height: 38px; flex: none; margin: 0 8px 0 19px; background: #dcdcdc; border-top: 1px solid #8f8f8f; display: flex; }
.cell { width: 45.900px; display: flex; align-items: center; justify-content: center; position: relative; padding-bottom: 1px; }
.cell.active { background: #ededed; }
.cell.open::after { content: ""; position: absolute; left: 4px; right: 4px; bottom: 0; height: 2px; background: #05b4c4; }
.cell.active::after { left: 0; right: 0; }
.tray { margin-left: auto; width: 279px; background: linear-gradient(90deg, #cfdde3 0, #cfe0f0 3%, #dddcec 10%, #e0deee); display: flex; align-items: center; padding: 0 0 2px 73px; border-right: 4px solid #d3d0dd; font-size: 11px; color: #222; }
.spk { margin-left: 9px; }
.bat { margin-left: 7px; }
.lang { margin-left: 9px; width: 32px; }
.clock { width: 54px; line-height: 17px; text-align: center; white-space: nowrap; letter-spacing: -.1px; }
.note { margin-left: 14px; font-size: 11px; }
```
FILE: map.js
```js
// Minor streets, street names and the legend of the city map.
(function () {
  var NS = 'http://www.w3.org/2000/svg';
  var seed = 41;
  function rnd() { seed = (seed * 16807) % 2147483647; return seed / 2147483647; }
  function add(parent, tag, attrs, text) {
    var e = document.createElementNS(NS, tag);
    for (var k in attrs) e.setAttribute(k, attrs[k]);
    if (text) e.textContent = text;
    parent.appendChild(e);
  }
  var streets = document.getElementById('streets');
  var places = document.getElementById('places');
  function net(clip, x0, y0, x1, y1, n, angle, color) {
    var d = '';
    for (var i = 0; i < n; i++) {
      var x = x0 + rnd() * (x1 - x0), y = y0 + rnd() * (y1 - y0);
      var a = angle + (rnd() < 0.5 ? 0 : Math.PI / 2) + (rnd() - 0.5) * 0.25;
      var len = 12 + rnd() * 38;
      d += 'M' + x.toFixed(1) + ' ' + y.toFixed(1);
      for (var j = 0; j < 3; j++) {
        x += Math.cos(a) * len / 3; y += Math.sin(a) * len / 3;
        d += 'L' + x.toFixed(1) + ' ' + y.toFixed(1);
        a += (rnd() - 0.5) * 0.35;
      }
    }
    add(streets, 'path', { d: d, fill: 'none', stroke: '#77757a', 'stroke-width': 2.5, opacity: 0.38, 'clip-path': 'url(#' + clip + ')' });
    add(streets, 'path', { d: d, fill: 'none', stroke: color, 'stroke-width': 1.4, opacity: 0.95, 'clip-path': 'url(#' + clip + ')' });
  }
  net('cOld', 940, 445, 1295, 690, 170, 0.1, '#fbfaf3');
  net('cSouth', 934, 600, 1240, 797, 200, 0.75, '#fffaf3');
  net('cEast', 1236, 500, 1410, 680, 180, 0.2, '#faf8fa');
  net('cYellow', 1240, 668, 1428, 797, 75, 0.05, '#fffef0');
  net('cWest', 934, 400, 1055, 797, 25, 0.6, '#fffdf0');
  net('cNorth', 1190, 342, 1306, 500, 60, 0.9, '#fbf3ea');

  // Boxes [x0, y0, x1, y1] that hold a label; no street name is placed over them.
  var taken = [[1000, 390, 1110, 420], [1080, 440, 1180, 470], [1266, 440, 1380, 488], [1308, 506, 1402, 533], [1325, 558, 1416, 588], [1190, 634, 1330, 664], [1300, 670, 1428, 695], [986, 718, 1143, 749], [1028, 528, 1095, 542], [1105, 645, 1175, 658], [934, 518, 960, 544], [934, 735, 972, 760], [1404, 465, 1428, 660], [1060, 688, 1100, 700], [1105, 476, 1135, 486]];
  function free(x, y) {
    for (var i = 0; i < taken.length; i++) {
      var t = taken[i];
      if (x + 30 > t[0] && x < t[2] && y + 2 > t[1] && y - 6 < t[3]) return false;
    }
    return true;
  }
  var names = ['P. Láng Hạ', 'Kim Mã', 'P. Cống Vị', 'P. Ô Chợ', 'Ngọc Hà', 'P. Trúc Bạch', 'Thái Hà', 'P. Nhân', 'Vạn Phúc', 'P. Phương'];
  var marks = ['#4d4a55', '#8d3554', '#5a5a5a', '#b34a5b', '#334455'];
  for (var i = 0; i < 170; i++) {
    var x = 940 + rnd() * 455, y = 510 + rnd() * 280;
    if (rnd() < 0.45) {
      if (!free(x, y)) continue;
      add(places, 'text', { x: x.toFixed(1), y: y.toFixed(1), opacity: 0.85 }, names[i % names.length]);
      taken.push([x, y - 5, x + 30, y + 1]);
    } else {
      add(places, 'rect', { x: x.toFixed(1), y: y.toFixed(1), width: 2.4, height: 2.4, opacity: 0.7, fill: marks[i % marks.length] });
    }
  }
  [[1092, 354, 'P. Quảng An'], [1066, 373, 'Phủ Tây Hồ'], [987, 425, 'Phú Thượng'], [989, 437, 'P. Bưởi'], [1107, 483, 'Thụy Khuê'], [1137, 353, 'Khách sạn'], [1212, 346, 'P. Tứ Liên'], [1235, 395, 'P. Yên Phụ'], [1063, 697, 'Hồ Đống Đa'], [937, 428, 'Nghĩa Đô']].forEach(function (p) {
    add(places, 'text', { x: p[0], y: p[1] }, p[2]);
  });

  var legend = document.getElementById('legend');
  add(legend, 'text', { x: 1334, y: 345, 'font-size': 8 }, 'CHÚ GIẢI   LEGEND');
  [['Khách sạn', 'Hotel'], ['Nhà khách', 'Guest house'], ['Câu lạc bộ', 'Club'], ['Đại lý vé máy bay', 'Airline agency'], ['Bể bơi', 'Swimming pool'], ['Công viên', 'Park'], ['Đại sứ quán', 'Embassies'], ['Nhà hát', 'Theatre'], ['Phim', 'Cinema'], ['Nhà thuyền', 'Bowling'], ['Siêu thị', 'Supermarket']].forEach(function (r, i) {
    var y = 360.5 + i * 7.6;
    add(legend, 'text', { x: 1312, y: y }, r[0]);
    add(legend, 'text', { x: 1428, y: y, 'class': 'en' }, r[1]);
    add(legend, 'rect', { x: i === 3 || i === 9 ? 1368 : 1371, y: y - 4, width: i === 3 || i === 9 ? 9 : 3, height: 2.6, fill: i % 2 ? '#4a8fb0' : '#555' });
  });
})();
```
